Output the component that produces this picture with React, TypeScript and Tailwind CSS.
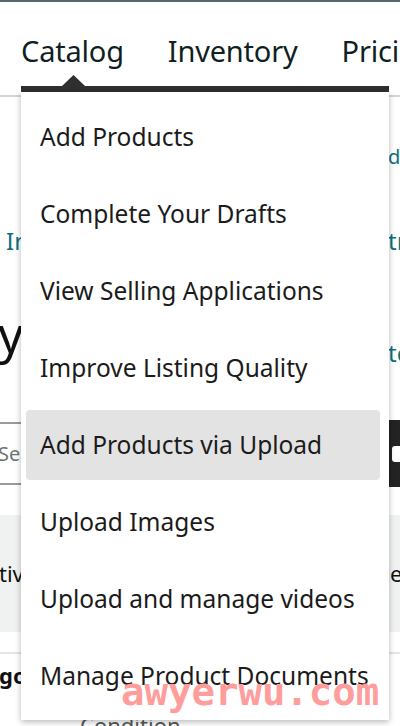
const menuItems = [
  'Add Products',
  'Complete Your Drafts',
  'View Selling Applications',
  'Improve Listing Quality',
  'Add Products via Upload',
  'Upload Images',
  'Upload and manage videos',
  'Manage Product Documents',
]

const font = { fontFamily: '"Noto Sans", "Open Sans", Arial, sans-serif' }

export default function App() {
  return (
    <div className="relative h-[726px] w-[400px] overflow-hidden bg-white text-[#0f1111]" style={font}>
      {/* page behind the menu */}
      <div className="h-[2px] bg-[#56686b]" />
      <nav className="flex h-[95px] items-start gap-[44px] whitespace-nowrap border-b-2 border-[#d3d5d5] pl-[21px] pt-[31px] text-[29px] leading-[36px] tracking-[-0.2px] text-[#0f1f23]">
        <span>Catalog</span>
        <span>Inventory</span>
        <span>Pricing</span>
      </nav>

      <div className="flex h-[78px] items-start justify-end pt-[48px]">
        <span className="w-[12px] overflow-hidden whitespace-nowrap text-[20px] leading-[24px] text-[#0e6f7f]">dd</span>
      </div>

      <div className="flex h-[125px] items-start justify-between pt-[52px] text-[24px] leading-[28px] text-[#0e6f7f]">
        <span className="pl-[6px]">In</span>
        <span className="w-[12px] overflow-hidden whitespace-nowrap">tr</span>
      </div>

      <div className="flex h-[115px] items-start justify-between">
        <span className="-ml-[2px] mt-[4px] text-[50px] leading-[60px] text-[#0f1111]">y</span>
        <span className="mt-[39px] w-[12px] overflow-hidden whitespace-nowrap text-[24px] leading-[28px] text-[#0e6f7f]">te</span>
      </div>

      <div className="mt-[5px] flex h-[67px] items-center">
        <div className="flex h-[63px] flex-1 items-center border-y-2 border-[#9b9b9b] text-[20px] text-[#6f7373]">
          <span className="-ml-[2px]">Search</span>
        </div>
        <div className="flex h-full w-[12px] items-center justify-end bg-[#232323]">
          <span className="h-[16px] w-[8px] rounded-l-[3px] bg-white" />
        </div>
      </div>

      <div className="mt-[28px] flex h-[117px] items-center justify-between bg-[#f0f2f2] text-[22px]">
        <span className="-ml-[1px]">tive</span>
        <span className="w-[12px] overflow-hidden pl-[2px]">e</span>
      </div>

      <div className="mt-[20px] border-t-2 border-[#e3e6e6] pt-[8px] text-[22px] font-bold leading-[26px]">
        <span className="-ml-[1px]">gory</span>
      </div>
      <div className="mt-[24px] pl-[80px] text-[22px] leading-[26px] text-[#565959]">Condition</div>

      {/* dropdown menu */}
      <div className="absolute left-[21px] top-[75px] w-[368px]">
        <svg width="23" height="11" viewBox="0 0 23 11" className="ml-[41px] block">
          <path d="M0 11 L11.5 0 L23 11 Z" fill="#2f2f2f" />
        </svg>
        <div className="h-[6px] bg-[#2f2f2f]" />
        <ul className="flex h-[628px] flex-col gap-[7px] bg-white pb-[9px] pl-[5px] pr-[9px] pt-[10px] shadow-[0_2px_6px_rgba(0,0,0,0.28)]">
          {menuItems.map((item, i) => (
            <li
              key={item}
              className={`flex h-[70px] items-center whitespace-nowrap rounded-[4px] pl-[14px] text-[24.5px] text-[#1b1b1b] ${
                i === 4 ? 'bg-[#e3e3e3]' : ''
              }`}
            >
              {item}
            </li>
          ))}
        </ul>
      </div>

      {/* watermark */}
      <div
        className="absolute left-[121px] top-[672px] text-[39px] font-bold leading-[40px] text-[#ff9d9d]"
        style={{ fontFamily: '"DejaVu Sans Mono", "Liberation Mono", monospace' }}
      >
        awyerwu.com
      </div>
    </div>
  )
}
